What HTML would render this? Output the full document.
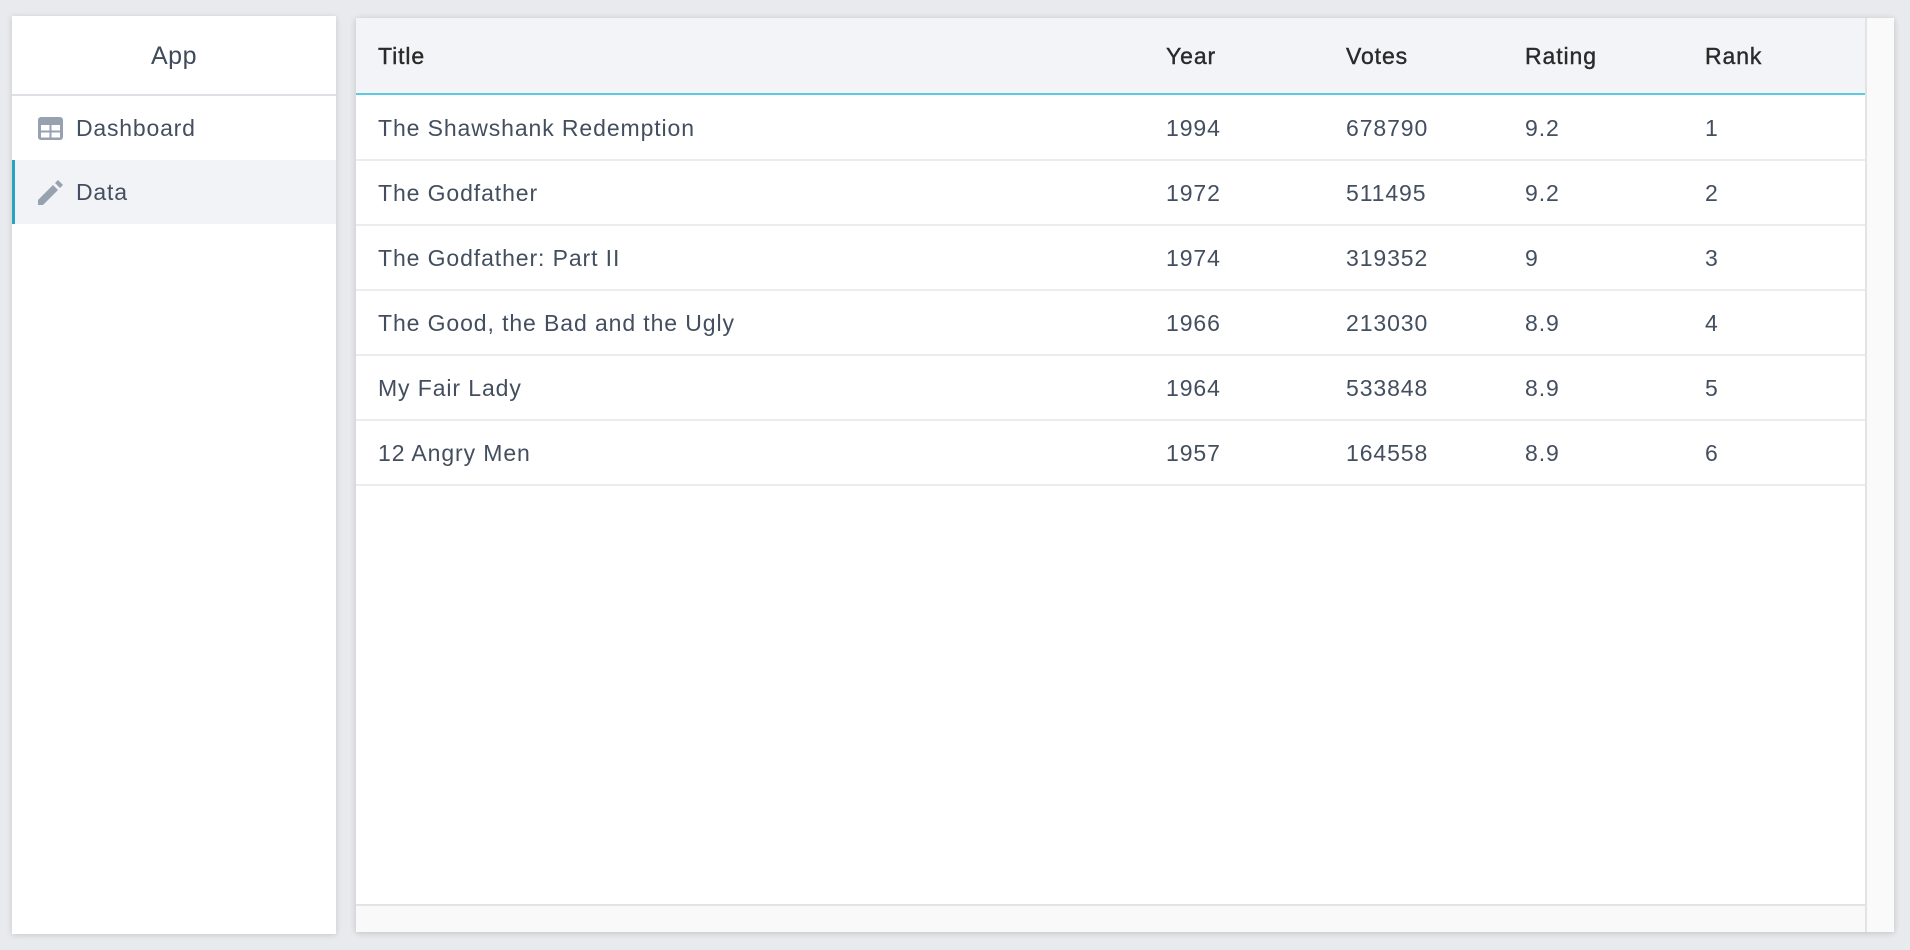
<!DOCTYPE html>
<html><head><style>
*{margin:0;padding:0;box-sizing:border-box}
body{width:1910px;height:950px;background:#e9eaed;font-family:"Liberation Sans",sans-serif;position:relative;overflow:hidden}
.side{position:absolute;left:12px;top:16px;width:324px;height:918px;background:#fff;box-shadow:0 1px 6px rgba(0,0,0,.15)}
.side .hd{height:80px;border-bottom:2px solid #dde0e5;text-align:center;line-height:80px;font-size:25px;color:#3f4a5b;letter-spacing:.5px}
.item{position:relative;height:64px;line-height:64px;font-size:23px;color:#434e5f;padding-left:64px;letter-spacing:.8px}
.item svg{position:absolute;left:26px;top:20px}
.item.act{background:#f2f3f6;border-left:3px solid #2aa3c0;padding-left:61px}
.item.act svg{left:23px}
.tbl{position:absolute;left:356px;top:18px;width:1538px;height:914px;background:#fff;box-shadow:0 1px 6px rgba(0,0,0,.18);overflow:hidden}
.th{position:absolute;left:0;top:0;width:1538px;height:77px;background:#f2f4f7;border-bottom:2px solid #5ec9e2}
.cell{position:absolute;font-size:23px;line-height:64px;color:#434e5f;letter-spacing:.9px}
.th .cell{color:#2a2a2a;line-height:77px;font-size:23px;letter-spacing:.9px;-webkit-text-stroke:.4px #2a2a2a}
.row{position:absolute;left:0;width:1509px;height:65px;border-bottom:2px solid #ebecee}
.vs{position:absolute;left:1509px;top:0;width:29px;height:914px;background:#fafafa;border-left:2px solid #e3e3e3}
.hs{position:absolute;left:0;top:886px;width:1509px;height:28px;background:#f9f9f9;border-top:2px solid #e3e3e3}
</style></head><body>
<div class="side">
<div class="hd">App</div>
<div class="item"><svg width="25" height="25" viewBox="0 0 25 25"><rect x="0" y="1" width="25" height="23" rx="3" fill="#97a1b0"/><rect x="3" y="9" width="8.5" height="5.5" fill="#fff"/><rect x="13.5" y="9" width="8.5" height="5.5" fill="#fff"/><rect x="3" y="16.5" width="8.5" height="5" fill="#fff"/><rect x="13.5" y="16.5" width="8.5" height="5" fill="#fff"/></svg>Dashboard</div>
<div class="item act"><svg width="25" height="25" viewBox="0 0 25 25"><path d="M0 20 L15 5 L20 10 L5 25 L0 25 Z" fill="#97a1b0"/><path d="M17 3 L20 0 L25 5 L22 8 Z" fill="#97a1b0"/></svg>Data</div>
</div>
<div class="tbl">
<div class="th">
<div class="cell" style="left:22px">Title</div><div class="cell" style="left:810px">Year</div><div class="cell" style="left:990px">Votes</div><div class="cell" style="left:1169px">Rating</div><div class="cell" style="left:1349px">Rank</div>
</div>
<div class="row" style="top:78px"><div class="cell" style="left:22px">The Shawshank Redemption</div><div class="cell" style="left:810px">1994</div><div class="cell" style="left:990px">678790</div><div class="cell" style="left:1169px">9.2</div><div class="cell" style="left:1349px">1</div></div>
<div class="row" style="top:143px"><div class="cell" style="left:22px">The Godfather</div><div class="cell" style="left:810px">1972</div><div class="cell" style="left:990px">511495</div><div class="cell" style="left:1169px">9.2</div><div class="cell" style="left:1349px">2</div></div>
<div class="row" style="top:208px"><div class="cell" style="left:22px">The Godfather: Part II</div><div class="cell" style="left:810px">1974</div><div class="cell" style="left:990px">319352</div><div class="cell" style="left:1169px">9</div><div class="cell" style="left:1349px">3</div></div>
<div class="row" style="top:273px"><div class="cell" style="left:22px">The Good, the Bad and the Ugly</div><div class="cell" style="left:810px">1966</div><div class="cell" style="left:990px">213030</div><div class="cell" style="left:1169px">8.9</div><div class="cell" style="left:1349px">4</div></div>
<div class="row" style="top:338px"><div class="cell" style="left:22px">My Fair Lady</div><div class="cell" style="left:810px">1964</div><div class="cell" style="left:990px">533848</div><div class="cell" style="left:1169px">8.9</div><div class="cell" style="left:1349px">5</div></div>
<div class="row" style="top:403px"><div class="cell" style="left:22px">12 Angry Men</div><div class="cell" style="left:810px">1957</div><div class="cell" style="left:990px">164558</div><div class="cell" style="left:1169px">8.9</div><div class="cell" style="left:1349px">6</div></div>
<div class="vs"></div>
<div class="hs"></div>
</div>
</body></html>
